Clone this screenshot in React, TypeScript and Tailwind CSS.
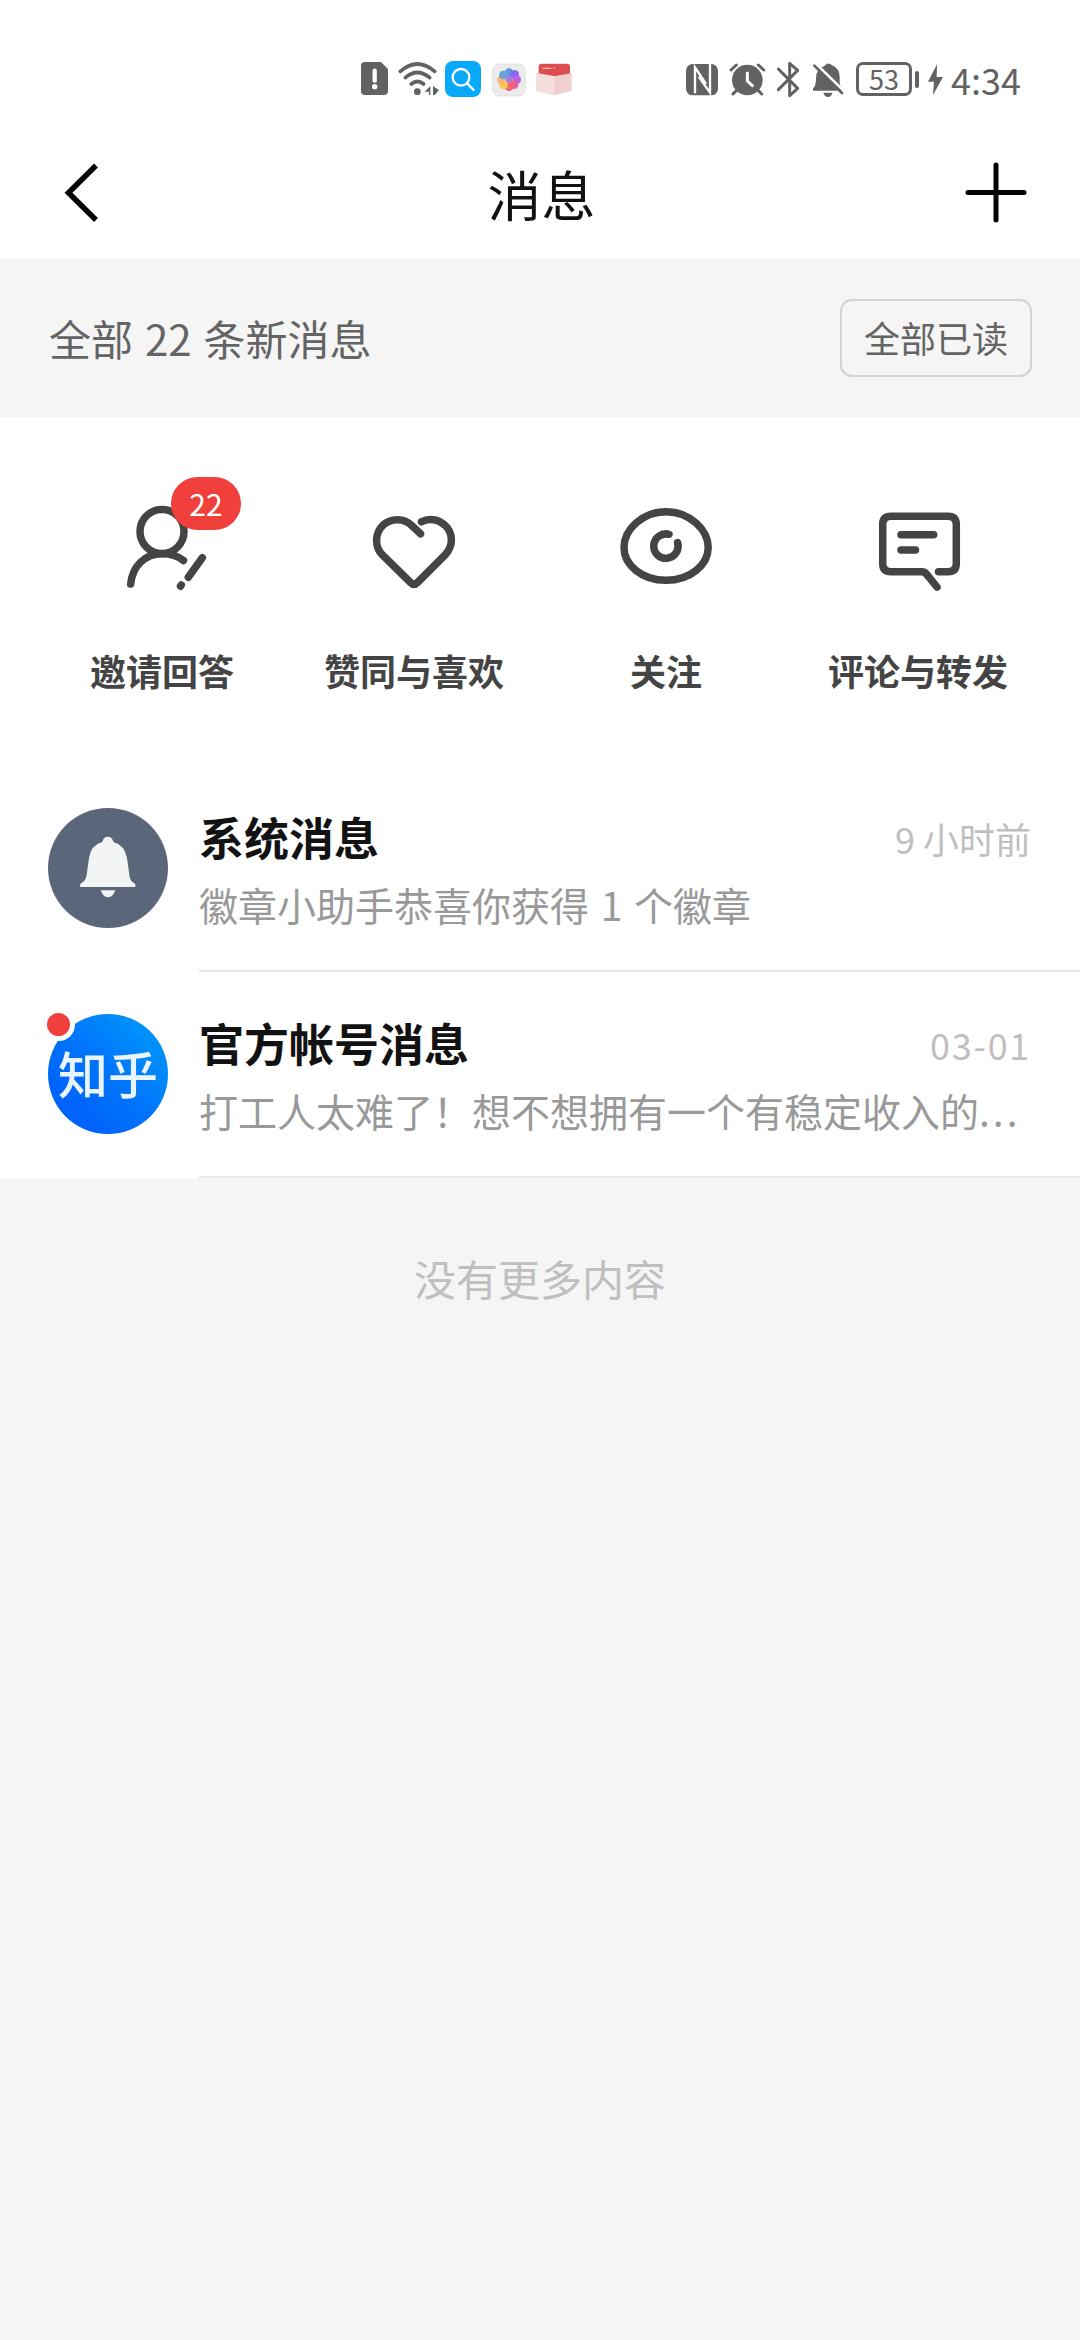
import type { ReactNode } from "react";

function StatusIcon({ x, width, children }: { x: number; width: number; children: ReactNode }) {
  return (
    <svg viewBox={`${x} 57 ${width} 120`} width={width / 3} height={40} fill="none" className="shrink-0">
      {children}
    </svg>
  );
}

const G = "#626262";

function StatusBar() {
  return (
    <div className="flex h-[120px] items-center pt-[59px] pb-[21px] pl-[361px] text-[#626262]">
      <StatusIcon x={63} width={81}>
        <path d="M75 66H123L144 87V153Q144 165 132 165H75Q63 165 63 153V78Q63 66 75 66Z" fill={G} />
        <path d="M104 92V122" stroke="#fff" strokeWidth="13" strokeLinecap="round" />
        <circle cx="104" cy="140" r="8" fill="#fff" />
      </StatusIcon>
      <div className="w-[10px]" />
      <StatusIcon x={174} width={123}>
        <g stroke={G} strokeWidth="11" strokeLinecap="round">
          <path d="M181 94Q232 50 284 94" />
          <path d="M196 113Q232 82 269 113" />
          <path d="M214 132Q232 117 251 132" />
        </g>
        <circle cx="232" cy="155" r="10" fill={G} />
        <path d="M254 155L271 138V165H267V155ZM279 138L297 151L284 165H279Z" fill={G} />
      </StatusIcon>
      <div className="w-[6px]" />
      <StatusIcon x={315} width={108}>
        <rect x="315" y="63" width="108" height="108" rx="24" fill="#08a8fb" />
        <circle cx="363" cy="112" r="25" stroke="#fff" strokeWidth="7" />
        <path d="M382 131L401 150" stroke="#fff" strokeWidth="7" strokeLinecap="round" />
      </StatusIcon>
      <div className="w-[11px]" />
      <StatusIcon x={455} width={102}>
        <rect x="457" y="72" width="98" height="96" rx="20" fill="#ececec" stroke="#d9d9d9" strokeWidth="2" />
        <g opacity="0.9">
          <circle cx="506" cy="98" r="13" fill="#4f8fe0" />
          <circle cx="523" cy="103" r="13" fill="#7a5cf0" />
          <circle cx="529" cy="119" r="13" fill="#b04fe8" />
          <circle cx="521" cy="134" r="13" fill="#ef4f83" />
          <circle cx="506" cy="140" r="13" fill="#f5566a" />
          <circle cx="490" cy="135" r="13" fill="#ffc04a" />
          <circle cx="483" cy="120" r="13" fill="#ffb06a" />
          <circle cx="489" cy="105" r="13" fill="#5a9ad8" />
          <circle cx="506" cy="118" r="10" fill="#a06fd0" />
        </g>
      </StatusIcon>
      <div className="w-[10px]" />
      <StatusIcon x={586} width={108}>
        <path d="M594 78Q595 71 604 71H680Q687 71 688 78V112H594Z" fill="#dc4c50" />
        <path d="M606 85H632M638 83H642" stroke="#f7b8b8" strokeWidth="4" />
        <path d="M587 99L641 109L693 99V152L641 166L587 152Z" fill="#f0cfcf" />
        <path d="M587 99L641 109V166L587 152Z" fill="#f6dedd" />
      </StatusIcon>
      <div className="w-[114px]" />
      <StatusIcon x={75} width={96}>
        <rect x="75" y="72" width="96" height="94" rx="20" fill={G} />
        <path d="M102 160V82L135 132M113 110L147 158V70" stroke="#fff" strokeWidth="7" />
      </StatusIcon>
      <div className="w-[11px]" />
      <StatusIcon x={204} width={111}>
        <circle cx="259" cy="120" r="46" fill={G} />
        <path d="M210 90L226 75M308 90L292 75M226 152L216 162M292 152L302 162" stroke={G} strokeWidth="9" strokeLinecap="round" />
        <path d="M259 99V123L274 137" stroke="#fff" strokeWidth="9" strokeLinecap="round" strokeLinejoin="round" />
      </StatusIcon>
      <div className="w-[11px]" />
      <StatusIcon x={347} width={69}>
        <path d="M351 87L409 145L385 167V70L409 91L351 149" stroke={G} strokeWidth="9" strokeLinecap="round" strokeLinejoin="round" />
      </StatusIcon>
      <div className="w-[12px]" />
      <StatusIcon x={452} width={96}>
        <path d="M490 77Q501 65 511 75Q535 84 535 112V128L541 152H455V145Q464 138 464 116Q464 100 472 88ZM486 158H513Q510 171 500 171Q490 171 486 158Z" fill={G} />
        <path d="M465 73L548 153" stroke="#fff" strokeWidth="8" />
        <path d="M459 77L542 159" stroke={G} strokeWidth="8" strokeLinecap="round" />
      </StatusIcon>
      <div className="ml-[12px] flex h-[34px] w-[56px] items-center justify-center rounded-[7px] border-[3px] border-[#626262] text-[27px] leading-none">
        <span className="-mt-[1px]">53</span>
      </div>
      <div className="ml-[3px] h-[17px] w-[4px] rounded-sm bg-[#626262]" />
      <div className="w-[9px]" />
      <StatusIcon x={802} width={45}>
        <path d="M829 73L802 125H820L817 165L847 111H828Z" fill={G} />
      </StatusIcon>
      <span className="ml-[8px] text-[36px] leading-none">4:34</span>
    </div>
  );
}

function Header() {
  return (
    <div className="flex h-[139px] items-center justify-between pt-[7px] pr-[52px] pl-[62px]">
      <svg width="38" height="64" viewBox="62 161 38 64" fill="none" stroke="#050505" strokeWidth="5.5">
        <path d="M96 165.5L68.500 192.800L96 220" />
      </svg>
      <h1 className="mt-[2px] ml-[19px] text-[54px] leading-none text-[#121212]">消息</h1>
      <svg width="64" height="64" viewBox="964 161 64 64" fill="none" stroke="#050505" strokeWidth="5" strokeLinecap="round">
        <path d="M968 192.500H1024M996 165V220" />
      </svg>
    </div>
  );
}

function ShortcutIcon({ children }: { children: ReactNode }) {
  return (
    <svg width="96" height="96" viewBox="0 0 96 96" fill="none" stroke="#444" strokeWidth="7.5" strokeLinecap="round" strokeLinejoin="round">
      {children}
    </svg>
  );
}

const shortcuts: { label: string; badge?: string; icon: ReactNode }[] = [
  {
    label: "邀请回答",
    badge: "22",
    icon: (
      <>
        <circle cx="48" cy="35.500" r="22" />
        <path d="M16.700 88C18.500 70 31 57.700 48 57.700C57 57.700 64 60 69.500 64.500" />
        <path d="M88.300 61.800L74.300 81.300M67.300 89L66.500 90.200" />
      </>
    ),
  },
  {
    label: "赞同与喜欢",
    icon: (
      <path d="M54.500 37.800L46 29.700C38 22 25 21.500 17 29.300C8.500 37.500 8.500 51 16.500 59L44.500 86.500Q48 90 51.500 86.500L79 59C87.500 50.500 87.500 37 79 29.300C72.500 23 62.500 21.800 55.500 25.800" />
    ),
  },
  {
    label: "关注",
    icon: (
      <>
        <path d="M6 51.500C6 34 24 15.700 48 15.700S90.200 34 90.200 51.500S72 84.300 48 84.300S6 69 6 51.500Z" />
        <path d="M51 38.300A12.200 12.200 0 1 0 59.600 46.500" />
      </>
    ),
  },
  {
    label: "评论与转发",
    icon: (
      <>
        <path d="M68.500 75.700H78Q86.300 75.700 86.300 67.500V28.500Q86.300 20.300 78 20.300H21Q12.700 20.300 12.700 28.500V67.500Q12.700 75.700 21 75.700H52Q54.500 75.700 56 77.500L67 91" />
        <path d="M31 38.700H63.700M31 54H45.500" />
      </>
    ),
  },
];

function Shortcuts() {
  return (
    <div className="grid h-[349px] grid-cols-4 bg-white px-9 pt-[79px]">
      {shortcuts.map((s) => (
        <div key={s.label} className="flex flex-col items-center">
          <div className="relative">
            <ShortcutIcon>{s.icon}</ShortcutIcon>
            {s.badge && (
              <span className="absolute -top-[19px] left-[57px] flex h-[53px] w-[70px] items-center justify-center rounded-full bg-[#f1403c] pb-[2px] text-[30px] leading-none text-white">
                {s.badge}
              </span>
            )}
          </div>
          <span className="mt-[60px] text-[36px] leading-none font-bold text-[#444]">{s.label}</span>
        </div>
      ))}
    </div>
  );
}

function BellAvatar() {
  return (
    <div className="size-[120px] rounded-full bg-[#5b667a]">
      <svg viewBox="0 0 120 120" fill="#f3f4f5">
        <path d="M54.300 34Q55.500 28.700 59.800 28.700Q64 28.700 65.500 34Q76.500 37 79 50L81.500 68Q82 73 86 75Q88.500 77 87 79H32.600Q31 77 33.500 75Q37.500 73 38.500 68L41 50Q43 37 54.300 34Z" />
        <path d="M52.800 82.300H67.200Q65 89.300 60 89.300Q55 89.300 52.800 82.300Z" />
      </svg>
    </div>
  );
}

function ZhihuAvatar() {
  return (
    <div className="relative flex size-[120px] items-center justify-center rounded-full bg-linear-to-tr from-[#0057fb] via-[#0074fb] to-[#009ff8] pb-[5px]">
      <span className="text-[50px] leading-none font-medium text-[#e8f4ff]">知乎</span>
      <span className="absolute -top-[6px] -left-[6px] size-[33px] rounded-full border-[5px] border-white bg-[#f1403c]" />
    </div>
  );
}

type Message = { avatar: ReactNode; title: string; time: ReactNode; text: ReactNode };

function MessageRow({ avatar, title, time, text }: Message) {
  return (
    <div className="flex h-[206px] bg-white pl-12">
      <div className="pt-[42px]">{avatar}</div>
      <div className="ml-[31px] min-w-0 flex-1 border-b-2 border-[#e8e8e8] pt-[48px] pr-[49px]">
        <div className="flex h-[45px] items-center justify-between">
          <h2 className="text-[45px] leading-none font-bold text-[#121212]">{title}</h2>
          <span className="mt-[3px] text-[36px] leading-none text-[#bfbfbf]">{time}</span>
        </div>
        <p className="mt-[26px] text-[39px] leading-none whitespace-nowrap text-[#999] [word-spacing:3px]">{text}</p>
      </div>
    </div>
  );
}

export default function App() {
  return (
    <div lang="zh-CN" className="h-[2340px] w-[1080px] overflow-hidden bg-[#f5f5f5] font-['Noto_Sans_CJK_SC',sans-serif]">
      <div className="bg-white">
        <StatusBar />
        <Header />
      </div>
      <div className="flex h-[158px] items-center justify-between pr-12 pl-[49px]">
        <span className="text-[42px] leading-none text-[#646464] [word-spacing:2.5px]">全部 22 条新消息</span>
        <button className="h-[78px] w-[192px] rounded-[12px] border-2 border-[#d3d3d3] pb-[2px] text-[36px] leading-none text-[#646464]">
          全部已读
        </button>
      </div>
      <Shortcuts />
      <MessageRow avatar={<BellAvatar />} title="系统消息" time="9 小时前" text="徽章小助手恭喜你获得 1 个徽章" />
      <MessageRow
        avatar={<ZhihuAvatar />}
        title="官方帐号消息"
        time={<span className="tracking-[1.7px]">03-01</span>}
        text={
          <>
            打工人太难了！想不想拥有一个有稳定收入的<span className="tracking-[3px]">...</span>
          </>
        }
      />
      <p className="mt-[79px] text-center text-[42px] leading-none text-[#bfbfbf]">没有更多内容</p>
    </div>
  );
}
